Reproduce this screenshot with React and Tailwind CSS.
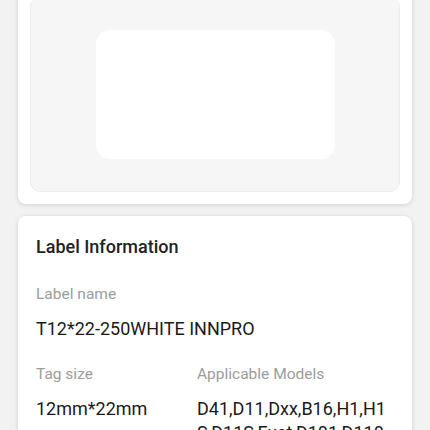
export default function App() {
  return (
    <div
      className="h-[430px] w-[430px] overflow-hidden bg-[#f2f2f2]"
      style={{ fontFamily: "Roboto, 'Noto Sans', sans-serif" }}
    >
      <div className="mx-[18px] mt-[-15px] rounded-[8px] bg-white p-[12px] shadow-[0_1px_5px_rgba(0,0,0,0.14)]">
        <div className="flex h-[195px] justify-center rounded-[10px] border border-[#ececec] bg-[#f6f6f6] pt-[32px]">
          <div className="h-[129px] w-[239px] rounded-[14px] bg-white" />
        </div>
      </div>

      <div className="mx-[18px] mt-[12px] rounded-[8px] bg-white px-[18px] pt-[19px] pb-4 shadow-[0_1px_5px_rgba(0,0,0,0.14)]">
        <div className="text-[18px] font-medium leading-[24px] text-[#222]">Label Information</div>

        <div className="mt-[24px] text-[15.5px] leading-[22px] text-[#9c9c9c]">Label name</div>
        <div className="mt-[12px] text-[18px] leading-[24px] text-[#1a1a1a]">T12*22-250WHITE INNPRO</div>

        <div className="mt-[22px] grid grid-cols-[161px_1fr]">
          <div>
            <div className="text-[15.5px] leading-[22px] text-[#9c9c9c]">Tag size</div>
            <div className="mt-[12px] text-[18px] leading-[24px] text-[#1a1a1a]">12mm*22mm</div>
          </div>
          <div>
            <div className="text-[15.5px] leading-[22px] text-[#9c9c9c]">Applicable Models</div>
            <div className="mt-[12px] break-all text-[18px] leading-[24px] text-[#1a1a1a]">
              D41,D11,Dxx,B16,H1,H1S,D11S,Fust,D101,D110,D61
            </div>
          </div>
        </div>
      </div>
    </div>
  );
}
